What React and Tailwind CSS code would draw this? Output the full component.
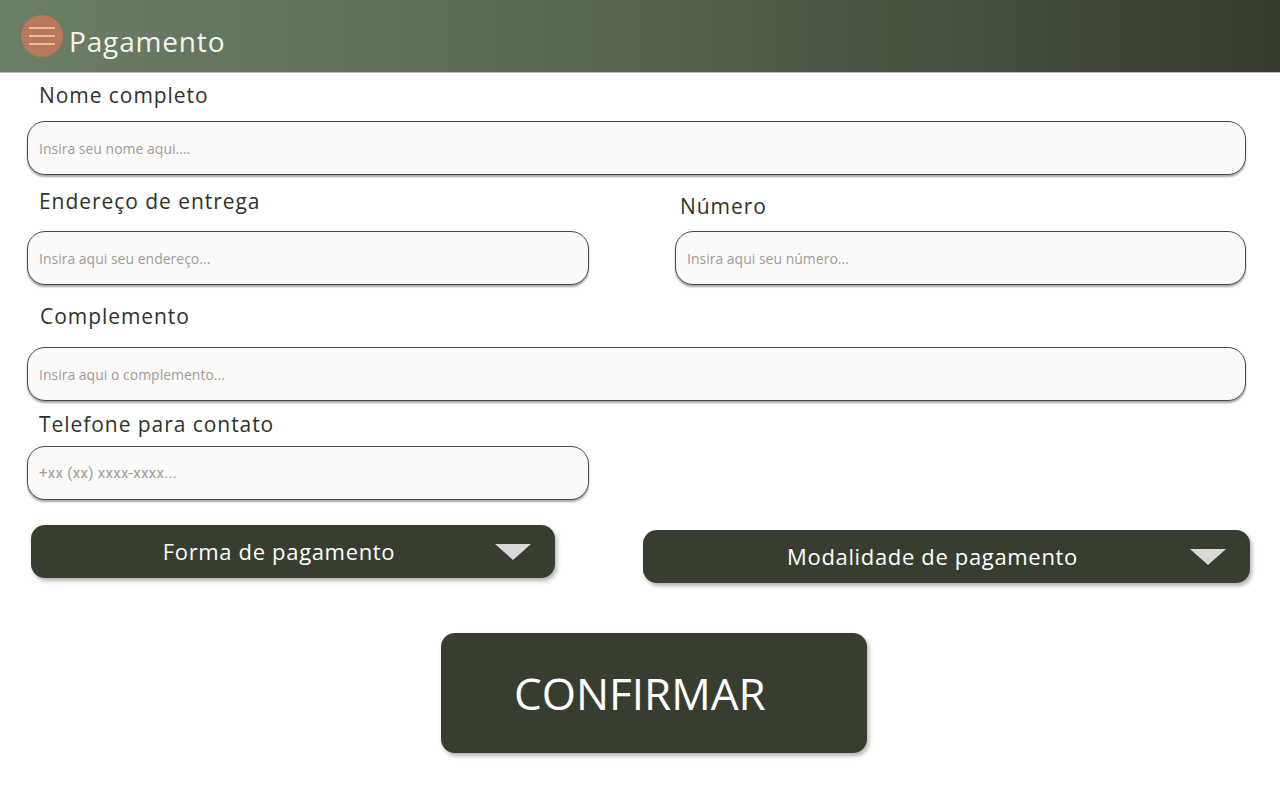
const font = { fontFamily: '"Open Sans", "Liberation Sans", sans-serif' };

const Label = ({ children, className = "" }) => (
  <div className={`h-[24px] leading-[24px] text-[21px] tracking-[0.045em] text-[#2e3229] ${className}`}>{children}</div>
);

const Field = ({ placeholder, className = "", mono = false }) => (
  <input
    placeholder={placeholder}
    className={`h-[54px] w-full rounded-[18px] border border-[#4a4a46] bg-[#fbfaf8] px-[11px] text-[14px] text-[#333] placeholder:text-[#9d9c98] shadow-[0_2px_2px_rgba(0,0,0,0.35)] outline-none ${
      mono ? "font-[family-name:Roboto] text-[15px] tracking-[0.02em]" : ""
    } ${className}`}
  />
);

const Select = ({ label, className = "" }) => (
  <button
    className={`relative flex h-[53px] shrink-0 items-center justify-center rounded-[14px] bg-[#373e30] pr-[28px] text-[22px] tracking-[0.03em] text-white shadow-[2px_3px_4px_rgba(0,0,0,0.3)] ${className}`}
  >
    <span>{label}</span>
    <svg
      viewBox="0 0 36 16"
      className="absolute right-[24px] top-1/2 h-[16px] w-[36px] -translate-y-1/2"
    >
      <polygon points="0,0 36,0 18,16" fill="#d9d9d7" />
    </svg>
  </button>
);

export default function App() {
  return (
    <div className="min-h-[786px] w-full bg-white" style={font}>
      {/* Header */}
      <header className="flex h-[73px] items-center gap-[6px] border-b border-[#b9c2b5] bg-gradient-to-r from-[#6c7f69] via-[#56644f] to-[#353c2d] pl-[21px]">
        <div className="flex h-[42px] w-[42px] flex-col items-center justify-center gap-[6px] rounded-full bg-[#b7795a]">
          <span className="block h-[2px] w-[26px] bg-[#e9bd98]" />
          <span className="block h-[2px] w-[26px] bg-[#e9bd98]" />
          <span className="block h-[2px] w-[26px] bg-[#e9bd98]" />
        </div>
        <h1 className="mt-[10px] text-[28px] tracking-[0.03em] text-[#f4f4ef]">Pagamento</h1>
      </header>

      <main className="pl-[27px] pr-[34px]">
        <Label className="mt-[10px] pl-[12px]">Nome completo</Label>
        <Field placeholder="Insira seu nome aqui...." className="mt-[14px]" />

        <div className="grid grid-cols-[562px_571px] gap-x-[86px]">
          <div>
            <Label className="mt-[14px] pl-[12px]">Endereço de entrega</Label>
            <Field placeholder="Insira aqui seu endereço..." className="mt-[18px] px-[9px]" />
          </div>
          <div>
            <Label className="mt-[19px] pl-[5px]">Número</Label>
            <Field placeholder="Insira aqui seu número..." className="mt-[13px] px-[9px]" />
          </div>
        </div>

        <Label className="mt-[19px] pl-[13px]">Complemento</Label>
        <Field placeholder="Insira aqui o complemento..." className="mt-[19px]" />

        <Label className="mt-[11px] pl-[12px]">Telefone para contato</Label>
        <div className="w-[562px]">
          <Field placeholder="+xx (xx) xxxx-xxxx..." className="mt-[10px] px-[9px]" mono />
        </div>

        <div className="mt-[25px] flex items-start">
          <Select label="Forma de pagamento" className="ml-[4px] w-[524px]" />
          <Select label="Modalidade de pagamento" className="ml-[88px] mt-[5px] w-[607px]" />
        </div>

        <div className="mt-[50px] flex">
          <button className="ml-[414px] flex h-[120px] w-[426px] items-center rounded-[14px] bg-[#373e30] pl-[73px] text-[44px] text-white shadow-[2px_3px_4px_rgba(0,0,0,0.3)]">
            CONFIRMAR
          </button>
        </div>
      </main>
    </div>
  );
}
